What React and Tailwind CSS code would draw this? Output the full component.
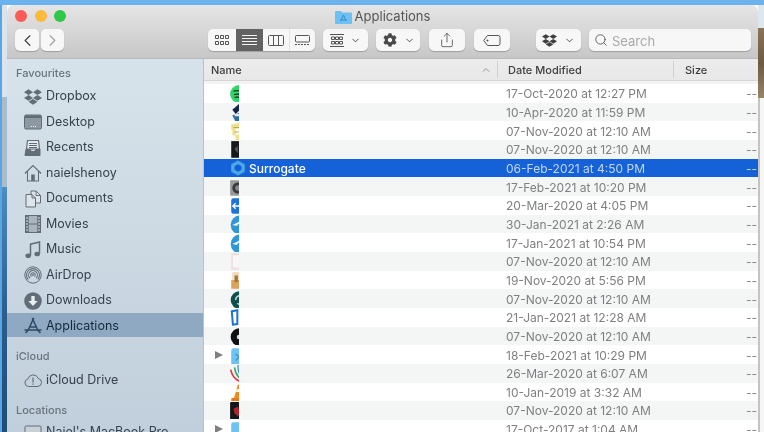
import React from "react";
import { ChevronLeft, ChevronRight, ChevronDown, ChevronUp, Search, Share } from "lucide-react";
import { FaDropbox, FaCog } from "react-icons/fa";

const Svg = ({ children, size = 18, className = "" }) => (
  <svg width={size} height={size} viewBox="0 0 18 18" fill="none" className={className}>
    {children}
  </svg>
);

const gray = "#626d78";

const sidebarIcons = {
  dropbox: <FaDropbox size={18} color={gray} />,
  desktop: (
    <Svg>
      <rect x="0.5" y="2" width="17" height="14" rx="1.5" fill="#8d98a3" stroke={gray} />
      <rect x="1" y="2.5" width="16" height="2.5" fill={gray} />
      <path d="M7 13.5h1M9 13.5h1M11 13.5h1" stroke="#eef2f5" />
    </Svg>
  ),
  recents: (
    <Svg>
      <path d="M3.5 1.5h11l1 8.5H2.5z" fill="#e4e9ee" stroke={gray} strokeWidth="1.2" />
      <path d="M5 4.5h8M5 6.5h8M5 8.5h8" stroke={gray} />
      <path d="M1.5 10h5l1 2h3l1-2h5v6a1 1 0 0 1-1 1h-14a1 1 0 0 1-1-1z" fill={gray} />
    </Svg>
  ),
  home: (
    <Svg>
      <path d="M0.8 9.5L9 1.5l8.2 8M3.5 7.5V17h11V7.5" stroke={gray} strokeWidth="1.1" />
      <rect x="7.2" y="10.5" width="3.6" height="6.5" fill={gray} />
    </Svg>
  ),
  documents: (
    <Svg>
      <path d="M7 1h5l4.5 4.5V13H7z" fill="#dfe5ea" stroke={gray} />
      <path d="M2 4.5h6l3.5 3.5v9H2z" fill="#dfe5ea" stroke={gray} />
      <path d="M8 4.5V8h3.5M12 1v4.5h4.5" stroke={gray} />
    </Svg>
  ),
  movies: (
    <Svg>
      <rect x="1.5" y="0.5" width="15" height="17" fill="#aab5bf" stroke={gray} />
      <path d="M2 9h14" stroke={gray} />
      <rect x="1.5" y="0.5" width="3.2" height="17" fill={gray} />
      <rect x="13.3" y="0.5" width="3.2" height="17" fill={gray} />
      <path d="M2 3h2M2 6h2M2 9h2M2 12h2M2 15h2M14 3h2M14 6h2M14 9h2M14 12h2M14 15h2" stroke="#dbe2e8" />
    </Svg>
  ),
  music: (
    <Svg>
      <path d="M6.5 14.5V3.2L15.5 1v11.5" stroke={gray} strokeWidth="1.5" />
      <ellipse cx="4.2" cy="14.8" rx="2.8" ry="2.3" fill={gray} />
      <ellipse cx="13.2" cy="13" rx="2.8" ry="2.3" fill={gray} />
    </Svg>
  ),
  airdrop: (
    <Svg>
      <circle cx="9" cy="9" r="8.2" stroke={gray} strokeWidth="1" />
      <path d="M4.2 13.5a6.5 6.5 0 1 1 9.6 0M5.8 12a4.4 4.4 0 1 1 6.4 0M7.5 10.5a2.2 2.2 0 1 1 3 0" stroke={gray} strokeWidth="1.1" />
      <circle cx="9" cy="9" r="0.9" fill={gray} />
    </Svg>
  ),
  downloads: (
    <Svg>
      <circle cx="9" cy="9" r="8.8" fill={gray} />
      <path d="M7.3 4h3.4v5h3L9 14 4.300 9h3z" fill="#e8edf1" />
    </Svg>
  ),
  applications: (
    <Svg>
      <path d="M9.800 1L3.800 14M8.200 1l6 13M0.500 13h17M1.500 16l2.300-2.500M16.500 16l-2.300-2.500M5 10h8" stroke="#2c4a68" strokeWidth="1.5" />
    </Svg>
  ),
  cloud: (
    <Svg>
      <path d="M4.500 15.500a3.800 3.800 0 0 1-.6-7.500 5.400 5.400 0 0 1 10.300-.6 4.100 4.100 0 0 1-.3 8.100z" stroke={gray} strokeWidth="1" />
      <path d="M9 6.500v5M9 12.500v1.200" stroke={gray} strokeWidth="1.200" />
    </Svg>
  ),
  drive: (
    <Svg>
      <rect x="1" y="3" width="16" height="12" rx="1" fill="#c9d0d6" stroke={gray} />
    </Svg>
  ),
};

// the names are wiped in the picture, only the left part of each icon is left
const fileIcons = {
  spotify: (
    <Svg size={20}>
      <circle cx="9" cy="9" r="8" fill="#2fd566" />
      <path d="M4 6.500c3-.8 6-.5 8 .5M4.500 9.500c2.500-.6 5-.4 7 .5M5 12c2-.4 4-.3 6 .5" stroke="#14351f" strokeWidth="1.200" />
    </Svg>
  ),
  bird: (
    <Svg size={20}>
      <path d="M3 6l6-5v6l-3 3z" fill="#10234a" />
      <path d="M3 11l6-2v8H6z" fill="#2b6ca8" />
      <path d="M5 10h4v2H5z" fill="#dfe8f0" />
    </Svg>
  ),
  stickies: (
    <Svg size={20}>
      <path d="M2 2l7-1v5H6v5l3 .5V17H6v-5H3V7H2z" fill="#ece18f" />
      <path d="M4 5h5M5 9h4" stroke="#b7a95a" />
    </Svg>
  ),
  dark: (
    <Svg size={20}>
      <rect x="2" y="1" width="10" height="15" fill="#17181b" />
      <path d="M5 8l3-3v7z" fill="#52565c" />
    </Svg>
  ),
  surrogate: (
    <Svg size={18}>
      <path d="M9 1.500l6.800 3.800v7.400L9 16.500l-6.800-3.800V5.300z" fill="#4aa8e6" />
      <path d="M9 5.300l3.400 1.900v3.600L9 12.700l-3.400-1.900V7.200z" fill="#0f5fd6" />
    </Svg>
  ),
  disk: (
    <Svg size={20}>
      <rect x="1" y="2" width="11" height="14" rx="1" fill="#9a9a9a" />
      <circle cx="8" cy="9" r="5" fill="#36393b" />
      <circle cx="8" cy="9" r="2.500" fill="#85888a" />
    </Svg>
  ),
  teamBlue: (
    <Svg size={20}>
      <rect x="2" y="2" width="10" height="14" rx="2" fill="#1e73d8" />
      <path d="M9 9H4M6 6.500L3.500 9 6 11.500" stroke="#fff" strokeWidth="1.300" />
    </Svg>
  ),
  teleg: (
    <Svg size={20}>
      <circle cx="10" cy="9" r="8.500" fill="#2f97d6" />
      <path d="M3 9l8-4-4 5z" fill="#e8f3fa" />
    </Svg>
  ),
  blank: (
    <Svg size={20}>
      <rect x="2" y="1" width="9" height="15" rx="1" fill="#ecdfe0" />
      <rect x="3.500" y="3" width="7" height="11" fill="#f8f6f6" />
    </Svg>
  ),
  box: (
    <Svg size={20}>
      <rect x="2" y="8" width="10" height="8" fill="#dba25c" />
      <rect x="3" y="1" width="7" height="7" fill="#f1dcc0" />
      <rect x="5" y="4" width="3" height="6" fill="#a9743a" />
    </Svg>
  ),
  tealDisc: (
    <Svg size={20}>
      <circle cx="9.500" cy="9" r="8" fill="#0f4f4c" />
      <path d="M6 9a4 4 0 0 1 6-3.500M7.500 12a4 4 0 0 0 3 1" stroke="#cfe3df" strokeWidth="1.300" />
    </Svg>
  ),
  frame: (
    <Svg size={20}>
      <path d="M2.500 3l5-1v12.500l-4 .5z" stroke="#1b74cf" strokeWidth="1.800" />
    </Svg>
  ),
  blackDisc: (
    <Svg size={20}>
      <circle cx="9.500" cy="9" r="8" fill="#111" />
      <circle cx="9" cy="9" r="2" fill="#ddd" />
    </Svg>
  ),
  folder: (
    <Svg size={20}>
      <path d="M2 4a2 2 0 0 1 2-2h5l3 2h3v13H4a2 2 0 0 1-2-2z" fill="#6ec3f4" />
      <path d="M6 7l3 3-3 3" stroke="#3f8fc7" strokeWidth="1.200" />
    </Svg>
  ),
  folderPlain: (
    <Svg size={20}>
      <path d="M2 4a2 2 0 0 1 2-2h5l3 2h3v13H4a2 2 0 0 1-2-2z" fill="#6ec3f4" />
    </Svg>
  ),
  arcs: (
    <Svg size={20}>
      <path d="M1.500 5c1 5 4 9 9 11" stroke="#e8344e" strokeWidth="1.500" />
      <path d="M5 3c.5 5 2 8 6 11" stroke="#34a853" strokeWidth="1.300" />
      <path d="M8 1c0 5 .5 8 3 11" stroke="#3c8fd6" strokeWidth="1.200" />
    </Svg>
  ),
  vlc: (
    <Svg size={20}>
      <path d="M8 1.500h2l3.500 12H4.500z" fill="#f08a1d" />
      <path d="M6.900 5.500h4.200l.6 2.500H6.300z" fill="#f6f3ee" />
      <rect x="2" y="13.500" width="11" height="3" rx="1" fill="#e8791a" />
    </Svg>
  ),
  game: (
    <Svg size={20}>
      <rect x="1" y="1" width="11" height="16" rx="1" fill="#15161a" />
      <path d="M4 7l4-2 2 5-2 4-3-3z" fill="#b3242a" />
    </Svg>
  ),
};

const favourites = [
  ["dropbox", "Dropbox"],
  ["desktop", "Desktop"],
  ["recents", "Recents"],
  ["home", "naielshenoy"],
  ["documents", "Documents"],
  ["movies", "Movies"],
  ["music", "Music"],
  ["airdrop", "AirDrop"],
  ["downloads", "Downloads"],
  ["applications", "Applications"],
];

const rows = [
  { icon: "spotify", date: "17-Oct-2020 at 12:27 PM" },
  { icon: "bird", date: "10-Apr-2020 at 11:59 PM" },
  { icon: "stickies", date: "07-Nov-2020 at 12:10 AM" },
  { icon: "dark", date: "07-Nov-2020 at 12:10 AM" },
  { icon: "surrogate", date: "06-Feb-2021 at 4:50 PM", name: "Surrogate" },
  { icon: "disk", date: "17-Feb-2021 at 10:20 PM" },
  { icon: "teamBlue", date: "20-Mar-2020 at 4:05 PM" },
  { icon: "teleg", date: "30-Jan-2021 at 2:26 AM" },
  { icon: "teleg", date: "17-Jan-2021 at 10:54 PM" },
  { icon: "blank", date: "07-Nov-2020 at 12:10 AM" },
  { icon: "box", date: "19-Nov-2020 at 5:56 PM" },
  { icon: "tealDisc", date: "07-Nov-2020 at 12:10 AM" },
  { icon: "frame", date: "21-Jan-2021 at 12:28 AM" },
  { icon: "blackDisc", date: "07-Nov-2020 at 12:10 AM" },
  { icon: "folder", date: "18-Feb-2021 at 10:29 PM", folder: true },
  { icon: "arcs", date: "26-Mar-2020 at 6:07 AM" },
  { icon: "vlc", date: "10-Jan-2019 at 3:32 AM" },
  { icon: "game", date: "07-Nov-2020 at 12:10 AM" },
  { icon: "folderPlain", date: "17-Oct-2017 at 1:04 AM", folder: true },
];

const SidebarItem = ({ icon, label, active }) => (
  <div className={`flex items-center pl-[17px] ${active ? "mb-[1px] h-[24.500px] bg-[#8fa9c2] pt-[2px] text-[#14283c]" : "h-[25.500px] pt-[1px] text-[#37424d]"}`}>
    <span className="flex w-[22px] shrink-0 items-center">{sidebarIcons[icon]}</span>
    <span className="whitespace-nowrap">{label}</span>
  </div>
);

const ToolButton = ({ className = "", children }) => (
  <div className={`flex h-[22px] items-center justify-center rounded-[5px] bg-[#f7f7f7] shadow-[0_1px_1px_rgba(0,0,0,0.22)] ${className}`}>
    {children}
  </div>
);

const FileRow = ({ row, index }) => {
  const selected = row.name !== undefined;
  const bg = selected ? "bg-[#1461d8]" : index % 2 ? "bg-[#f4f5f5]" : "bg-white";
  return (
    <div className={`flex h-[18.67px] shrink-0 items-center text-[12px] ${bg}`}>
      <div className="flex w-[302px] shrink-0 items-center">
        <span className="flex w-[25px] shrink-0 justify-end pr-[6px]">
          {row.folder && <span className="h-0 w-0 border-y-[4px] border-l-[8px] border-y-transparent border-l-[#7f7f7f]"></span>}
        </span>
        {selected ? (
          <span className="flex items-center gap-[2px]">
            <span className="flex w-[18px] justify-center">{fileIcons[row.icon]}</span>
            <span className="pt-[2px] font-medium text-white">{row.name}</span>
          </span>
        ) : (
          <span className="block h-[18px] w-[10px] overflow-hidden">{fileIcons[row.icon]}</span>
        )}
      </div>
      <span className={`flex-1 whitespace-nowrap pt-[2px] ${selected ? "text-[#c3d7f5]" : "text-[#7d7f80]"}`}>{row.date}</span>
      <span className={`pt-[2px] pr-px ${selected ? "text-[#c3d7f5]" : "text-[#8a8a8a]"}`}>--</span>
    </div>
  );
};

export default function App() {
  return (
    <div className="h-[432px] w-[764px] overflow-hidden bg-white font-['Inter','Liberation_Sans',sans-serif] text-[12.5px] blur-[0.35px]">
      <div className="h-[5px] bg-[#6cb3ee]"></div>
      <div className="flex h-[427px]">
        {/* left edge: desktop wallpaper */}
        <div className="flex w-[7px] shrink-0">
          <div className="w-[2px] bg-[#5aa5e6]"></div>
          <div className="flex flex-1 flex-col">
            <div className="h-[92px] bg-[#dbe4ec]"></div>
            <div className="h-[90px] bg-[#a9bccb]"></div>
            <div className="flex-1 bg-gradient-to-b from-[#4d8dc0] via-[#2c5f8c] to-[#1f4c78]"></div>
          </div>
        </div>

        {/* window */}
        <div className="flex w-[751px] shrink-0 flex-col overflow-hidden rounded-t-[7px]">
          <div className="h-[54px] shrink-0 border-b border-[#b9b9b9] bg-gradient-to-b from-[#e5e5e5] to-[#c7c7c7]">
            <div className="relative flex h-[22px] items-center justify-center pt-[2px]">
              <div className="absolute top-[5px] left-[8px] flex gap-[7.500px]">
                <span className="h-3 w-3 rounded-full bg-[#fb5b57]"></span>
                <span className="h-3 w-3 rounded-full bg-[#fcbb3b]"></span>
                <span className="h-3 w-3 rounded-full bg-[#32c748]"></span>
              </div>
              <svg width="17" height="14" viewBox="0 0 17 14" className="mr-[3px]">
                <path d="M0 2a1 1 0 0 1 1-1h5l1.500 1.500H16a1 1 0 0 1 1 1V13a1 1 0 0 1-1 1H1a1 1 0 0 1-1-1z" fill="#6cc0f2" />
                <path d="M8.500 5L6 11M8.500 5L11 11M5 10h7" stroke="#3a8fca" strokeWidth="1" />
              </svg>
              <span className="text-[13px] text-[#555]">Applications</span>
            </div>
            <div className="mt-[2px] flex items-center pl-[8px]">
              <ToolButton className="w-[24px]"><ChevronLeft size={19} color="#444" strokeWidth={1.5} /></ToolButton>
              <ToolButton className="ml-[2px] w-[23px]"><ChevronRight size={19} color="#a3a3a3" strokeWidth={1.5} /></ToolButton>

              <div className="ml-[144px] flex h-[22px] w-[107px] overflow-hidden rounded-[5px] bg-[#f7f7f7] shadow-[0_1px_1px_rgba(0,0,0,0.22)]">
                <div className="flex w-[28px] items-center justify-center">
                  <svg width="14" height="11" viewBox="0 0 14 11" fill="none" stroke="#555">
                    <path d="M.5.500h3v3h-3zM5.500.500h3v3h-3zM10.500.500h3v3h-3zM.5 6.500h3v3h-3zM5.500 6.500h3v3h-3zM10.500 6.500h3v3h-3z" />
                  </svg>
                </div>
                <div className="flex w-[27px] items-center justify-center bg-[#626262]">
                  <svg width="15" height="12" viewBox="0 0 15 12" stroke="#f2f2f2">
                    <path d="M0 1.500h15M0 4.500h15M0 7.500h15M0 10.500h15" />
                  </svg>
                </div>
                <div className="flex w-[26px] items-center justify-center">
                  <svg width="16" height="11" viewBox="0 0 16 11" fill="none" stroke="#555">
                    <rect x=".5" y=".5" width="15" height="10" rx="1" />
                    <path d="M5.500 1v9M10.500 1v9" />
                  </svg>
                </div>
                <div className="flex w-[26px] items-center justify-center border-l border-[#e4e4e4]">
                  <svg width="15" height="11" viewBox="0 0 15 11" fill="none" stroke="#555">
                    <rect x=".5" y=".5" width="14" height="6.500" rx="1" />
                    <path d="M0 9.500h15" strokeDasharray="2 1" />
                  </svg>
                </div>
              </div>

              <ToolButton className="ml-[8px] w-[45px] gap-[6px]">
                <svg width="14" height="13" viewBox="0 0 14 13" fill="none" stroke="#555">
                  <path d="M0 .5h14M0 12.500h14M1.500 3h3v2.500h-3zM5.500 3h3v2.500h-3zM9.500 3h3v2.500h-3zM1.500 7.500h3V10h-3zM5.500 7.500h3V10h-3zM9.500 7.500h3V10h-3z" />
                </svg>
                <ChevronDown size={11} color="#444" strokeWidth={2} />
              </ToolButton>
              <ToolButton className="ml-[8px] w-[44px] gap-[7px] pl-[2px]">
                <FaCog size={14} color="#4a4a4a" />
                <ChevronDown size={11} color="#444" strokeWidth={2} />
              </ToolButton>
              <ToolButton className="ml-[9px] w-[36px]"><Share size={16} color="#4a4a4a" strokeWidth={1.2} /></ToolButton>
              <ToolButton className="ml-[9px] w-[36px]">
                <svg width="18" height="11" viewBox="0 0 18 11" fill="none" stroke="#555">
                  <path d="M4.500.5H15a2 2 0 0 1 2 2v6a2 2 0 0 1-2 2H4.500L.7 5.500z" />
                  <circle cx="4.500" cy="5.500" r=".6" fill="#555" />
                </svg>
              </ToolButton>
              <ToolButton className="ml-[26px] w-[45px] gap-[7px]">
                <FaDropbox size={15} color="#3f3f3f" />
                <ChevronDown size={11} color="#444" strokeWidth={2} />
              </ToolButton>
              <ToolButton className="ml-[8px] w-[162px] justify-start pl-[5px]">
                <Search size={14} color="#555" strokeWidth={1.5} />
                <span className="ml-[4px] pt-[3px] text-[13px] text-[#a9a9a9]">Search</span>
              </ToolButton>
            </div>
          </div>

          <div className="flex min-h-0 flex-1">
            {/* sidebar */}
            <div className="w-[197px] shrink-0 overflow-hidden border-r border-[#b8c2cb] bg-gradient-to-b from-[#d7e3ea] to-[#c1cfdc]">
              <div className="h-[24.300px] pt-[6.500px] pl-[9px] text-[11px] leading-[15px] font-medium text-[#69747f]">Favourites</div>
              {favourites.map(([icon, label]) => (
                <SidebarItem key={label} icon={icon} label={label} active={label === "Applications"} />
              ))}
              <div className="h-[28.600px] pt-[11px] pl-[9px] text-[11px] leading-[15px] font-medium text-[#69747f]">iCloud</div>
              <SidebarItem icon="cloud" label="iCloud Drive" />
              <div className="h-[26.600px] pt-[11px] pl-[9px] text-[11px] leading-[15px] font-medium text-[#69747f]">Locations</div>
              <SidebarItem icon="drive" label="Naiel's MacBook Pro" />
            </div>

            {/* file list */}
            <div className="flex min-w-0 flex-1 flex-col overflow-hidden">
              <div className="flex h-[22px] shrink-0 items-center border-b border-[#d6d6d6] bg-gradient-to-b from-[#ececec] to-[#e8e8e8] text-[11px] font-medium text-[#3d3d3d]">
                <span className="w-[270px] pt-[2px] pl-[7px]">Name</span>
                <span className="flex w-[23px] justify-center"><ChevronUp size={12} color="#9a9a9a" strokeWidth={2} /></span>
                <span className="flex h-[17px] w-[176px] items-center border-l border-[#cfcfcf] pt-[2px] pl-[10px]">Date Modified</span>
                <span className="flex h-[17px] flex-1 items-center border-l border-[#cfcfcf] pt-[2px] pl-[11px]">Size</span>
              </div>
              <div className="h-[3px] shrink-0 bg-[#f2f3f3]"></div>
              {rows.map((row, index) => (
                <FileRow key={index} row={row} index={index} />
              ))}
            </div>
          </div>
        </div>

        {/* right edge */}
        <div className="flex w-[6px] shrink-0 flex-col">
          <div className="h-[23px] bg-[#dfe7ee]"></div>
          <div className="h-[70px] bg-gradient-to-b from-[#8b7458] via-[#6c5a46] to-[#9a8468]"></div>
          <div className="flex-1 border-l-2 border-[#c4c4c4] bg-[#f6f6f6]"></div>
        </div>
      </div>
    </div>
  );
}
